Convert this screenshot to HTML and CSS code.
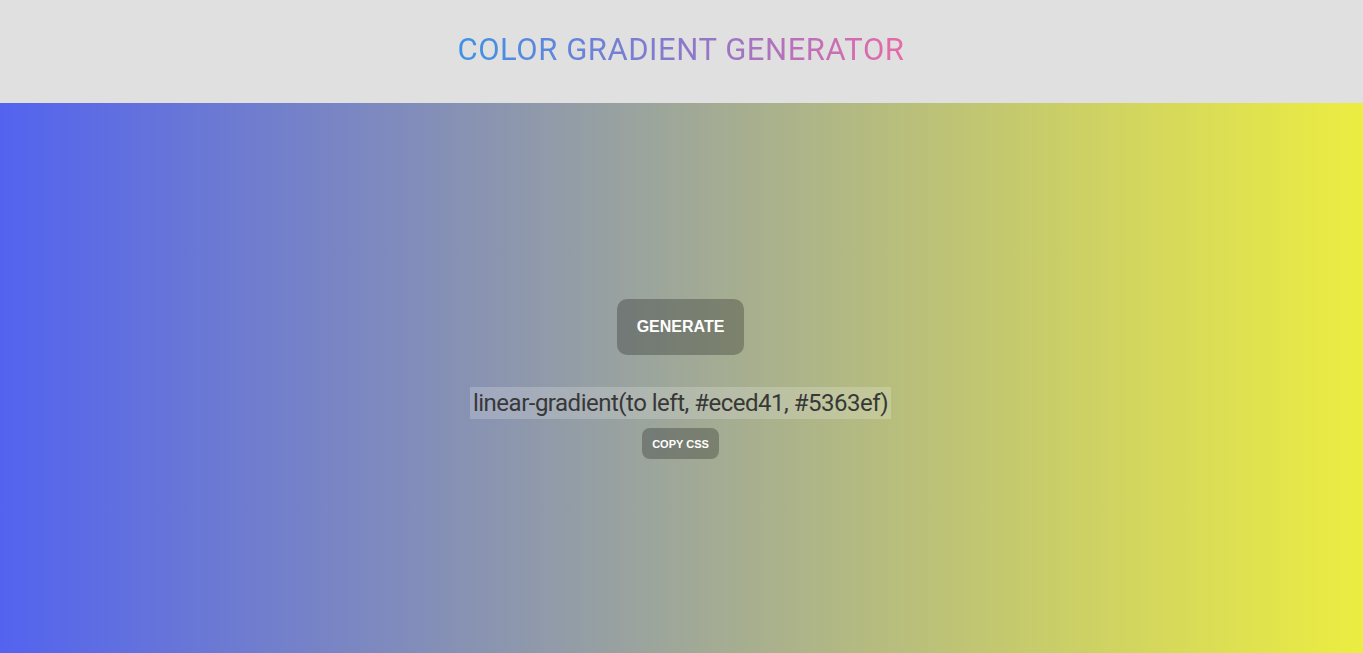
FILE: index.html
```html
<!DOCTYPE html>
<html>
<head>
<meta charset="utf-8">
<link rel="stylesheet" href="styles.css">
</head>
<body>
<header class="header">
  <h1 class="title">COLOR GRADIENT GENERATOR</h1>
</header>
<main class="stage">
  <button class="btn btn-generate">GENERATE</button>
  <div class="code"><span class="code-text">linear-gradient(to left, #eced41, #5363ef)</span></div>
  <button class="btn btn-copy">COPY CSS</button>
</main>
</body>
</html>
```
FILE: styles.css
```css
* { box-sizing: border-box; }
html, body { margin: 0; padding: 0; height: 100%; }
body { display: flex; flex-direction: column; font-family: Roboto, "Liberation Sans", sans-serif; overflow: hidden; }
.header {
  height: 103px;
  background: #e0e0e0;
  display: flex;
  align-items: center;
  justify-content: center;
  flex-shrink: 0;
  padding-right: 1px;
}
.title {
  margin: 0;
  font-family: Roboto, sans-serif;
  font-weight: 400;
  font-size: 31px;
  letter-spacing: 0.55px;
  background: linear-gradient(to right, #3f91e6, #8a78cc, #e66aa8);
  -webkit-background-clip: text;
  background-clip: text;
  color: transparent;
  padding-bottom: 4px;
}
.stage {
  flex: 1;
  background: linear-gradient(to left, #eced41, #5363ef);
  display: flex;
  flex-direction: column;
  align-items: center;
  justify-content: center;
  padding-top: 2px;
  padding-right: 2px;
}
.btn {
  border: none;
  color: #fff;
  font-family: "Liberation Sans", Arial, sans-serif;
  font-weight: 700;
  background: rgba(0, 0, 0, 0.25);
  cursor: pointer;
}
.btn-generate {
  width: 127px;
  height: 56px;
  border-radius: 10px;
  font-size: 16px;
}
.code {
  margin-top: 32px;
}
.code-text {
  display: inline-block;
  background: rgba(255, 255, 255, 0.2);
  color: #383838;
  font-family: Roboto, sans-serif;
  font-size: 24px;
  letter-spacing: -0.5px;
  line-height: 32px;
  padding: 0 3px;
}
.btn-copy {
  margin-top: 9px;
  width: 77px;
  height: 31px;
  border-radius: 8px;
  font-size: 11px;
}
```
